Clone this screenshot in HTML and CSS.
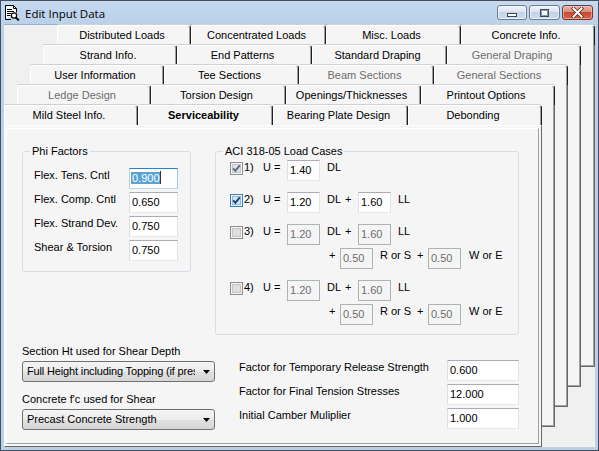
FILE: index.html
```html
<!DOCTYPE html>
<html>
<head>
<meta charset="utf-8">
<title>Edit Input Data</title>
<link rel="stylesheet" href="styles.css">
</head>
<body>
<div class="window">
  <div class="titlebar">
    <svg class="app-icon" width="16" height="16" viewBox="0 0 16 16">
      <path d="M1.5 14.5V0.5H9.5L12.5 3.5V7.5" fill="#fff" stroke="#000"/>
      <path d="M9.5 0.5V3.5H12.5" fill="none" stroke="#000"/>
      <path d="M3 4.5H8M3 6.5H10M3 8.5H7M3 10.5H6.5M1.5 14.5H7" fill="none" stroke="#000"/>
      <circle cx="10" cy="10.5" r="2.6" fill="#fff" stroke="#000" stroke-width="1.2"/>
      <path d="M11.8 12.4L14.8 15.4" stroke="#000" stroke-width="2"/>
    </svg>
    <span class="title">Edit Input Data</span>
    <div class="caption-buttons">
      <div class="cbtn cmin"><span class="min-glyph"></span></div>
      <div class="cbtn cmax"><span class="max-glyph"></span></div>
      <div class="cbtn cclose">
        <svg width="13" height="11" viewBox="0 0 13 11">
          <path d="M2.5 1.5L10.5 9.5M10.5 1.5L2.5 9.5" stroke="#5a2a22" stroke-width="3.6" stroke-linecap="square"/>
          <path d="M2.5 1.5L10.5 9.5M10.5 1.5L2.5 9.5" stroke="#fff" stroke-width="2" stroke-linecap="square"/>
        </svg>
      </div>
    </div>
  </div>

  <div class="client">
    <div class="deck">
      <div class="layer l1">
        <div class="tabrow">
          <div class="tab wa">Distributed Loads</div>
          <div class="tab wb">Concentrated Loads</div>
          <div class="tab wb">Misc. Loads</div>
          <div class="tab wa">Concrete Info.</div>
        </div>
        <div class="sheet"></div>
      </div>
      <div class="layer l2">
        <div class="tabrow">
          <div class="tab wa">Strand Info.</div>
          <div class="tab wb">End Patterns</div>
          <div class="tab wb">Standard Draping</div>
          <div class="tab wa off">General Draping</div>
        </div>
        <div class="sheet"></div>
      </div>
      <div class="layer l3">
        <div class="tabrow">
          <div class="tab wa">User Information</div>
          <div class="tab wb">Tee Sections</div>
          <div class="tab wb off">Beam Sections</div>
          <div class="tab wa off">General Sections</div>
        </div>
        <div class="sheet"></div>
      </div>
      <div class="layer l4">
        <div class="tabrow">
          <div class="tab wa off">Ledge Design</div>
          <div class="tab wb">Torsion Design</div>
          <div class="tab wb">Openings/Thicknesses</div>
          <div class="tab wa">Printout Options</div>
        </div>
        <div class="sheet"></div>
      </div>
      <div class="layer l5">
        <div class="tabrow">
          <div class="tab wa">Mild Steel Info.</div>
          <div class="tab wb active">Serviceability</div>
          <div class="tab wb">Bearing Plate Design</div>
          <div class="tab wa">Debonding</div>
        </div>
        <div class="sheet front">
          <div class="pane">
            <div class="top-section">
              <div class="group phi">
                <span class="group-title">Phi Factors</span>
                <div class="prow"><span class="lbl plbl">Flex. Tens. Cntl</span><span class="tb focus w49"><span class="sel">0.900</span><span class="caret"></span></span></div>
                <div class="prow"><span class="lbl plbl">Flex. Comp. Cntl</span><span class="tb w49">0.650</span></div>
                <div class="prow"><span class="lbl plbl">Flex. Strand Dev.</span><span class="tb w49">0.750</span></div>
                <div class="prow"><span class="lbl plbl">Shear &amp; Torsion</span><span class="tb w49">0.750</span></div>
              </div>

              <div class="group aci">
                <span class="group-title">ACI 318-05 Load Cases</span>
                <div class="arow">
                  <svg class="cb" width="13" height="13" viewBox="0 0 13 13">
                    <rect x="0.5" y="0.5" width="12" height="12" fill="#f4f4f4" stroke="#8f8f8f"/>
                    <rect x="2.5" y="2.5" width="8" height="8" fill="#dedfe0" stroke="#c4c6c8"/>
                    <path d="M3.2 6.3L5.4 8.8L9.8 3.4" fill="none" stroke="#5e6a80" stroke-width="1.9"/>
                  </svg>
                  <span class="lbl n1">1)</span><span class="lbl ueq">U =</span>
                  <span class="tb w33">1.40</span>
                  <span class="lbl dl only">DL</span>
                </div>
                <div class="arow">
                  <svg class="cb" width="13" height="13" viewBox="0 0 13 13">
                    <rect x="0.5" y="0.5" width="12" height="12" fill="#eef6fc" stroke="#3c7fb1"/>
                    <rect x="2.5" y="2.5" width="8" height="8" fill="#cfe5f6" stroke="#8fbcdc"/>
                    <path d="M3.2 6.3L5.4 8.8L9.8 3.4" fill="none" stroke="#233f68" stroke-width="1.9"/>
                  </svg>
                  <span class="lbl n1">2)</span><span class="lbl ueq">U =</span>
                  <span class="tb w33">1.20</span>
                  <span class="lbl dl">DL</span><span class="lbl plus">+</span>
                  <span class="tb w33">1.60</span>
                  <span class="lbl ll">LL</span>
                </div>
                <div class="arow">
                  <svg class="cb" width="13" height="13" viewBox="0 0 13 13">
                    <rect x="0.5" y="0.5" width="12" height="12" fill="#f4f4f4" stroke="#8f8f8f"/>
                    <rect x="2.5" y="2.5" width="8" height="8" fill="#dedfe0" stroke="#c4c6c8"/>
                  </svg>
                  <span class="lbl n1">3)</span><span class="lbl ueq">U =</span>
                  <span class="tb dis w33">1.20</span>
                  <span class="lbl dl">DL</span><span class="lbl plus">+</span>
                  <span class="tb dis w33">1.60</span>
                  <span class="lbl ll">LL</span>
                </div>
                <div class="arow sub">
                  <span class="lbl lead">+</span>
                  <span class="tb dis w33">0.50</span>
                  <span class="lbl ros">R or S</span><span class="lbl plus2">+</span>
                  <span class="tb dis w33">0.50</span>
                  <span class="lbl woe">W or E</span>
                </div>
                <div class="arow">
                  <svg class="cb" width="13" height="13" viewBox="0 0 13 13">
                    <rect x="0.5" y="0.5" width="12" height="12" fill="#f4f4f4" stroke="#8f8f8f"/>
                    <rect x="2.5" y="2.5" width="8" height="8" fill="#dedfe0" stroke="#c4c6c8"/>
                  </svg>
                  <span class="lbl n1">4)</span><span class="lbl ueq">U =</span>
                  <span class="tb dis w33">1.20</span>
                  <span class="lbl dl">DL</span><span class="lbl plus">+</span>
                  <span class="tb dis w33">1.60</span>
                  <span class="lbl ll">LL</span>
                </div>
                <div class="arow sub">
                  <span class="lbl lead">+</span>
                  <span class="tb dis w33">0.50</span>
                  <span class="lbl ros">R or S</span><span class="lbl plus2">+</span>
                  <span class="tb dis w33">0.50</span>
                  <span class="lbl woe">W or E</span>
                </div>
              </div>
            </div>

            <div class="bottom-section">
              <div class="left-col">
                <div class="lbl cap">Section Ht used for Shear Depth</div>
                <div class="combo">
                  <span class="combo-text narrow">Full Height including Topping (if pres</span>
                  <svg class="arrow" width="7" height="4" viewBox="0 0 7 4"><path d="M0 0H7L3.5 4Z" fill="#000"/></svg>
                </div>
                <div class="lbl cap cap2">Concrete f'c used for Shear</div>
                <div class="combo">
                  <span class="combo-text">Precast Concrete Strength</span>
                  <svg class="arrow" width="7" height="4" viewBox="0 0 7 4"><path d="M0 0H7L3.5 4Z" fill="#000"/></svg>
                </div>
              </div>
              <div class="right-col">
                <div class="rrow"><span class="lbl rlbl">Factor for Temporary Release Strength</span><span class="tb w72">0.600</span></div>
                <div class="rrow"><span class="lbl rlbl">Factor for Final Tension Stresses</span><span class="tb w72">12.000</span></div>
                <div class="rrow"><span class="lbl rlbl">Initial Camber Muliplier</span><span class="tb w72">1.000</span></div>
              </div>
            </div>
          </div>
        </div>
      </div>
    </div>
  </div>
</div>
</body>
</html>
```
FILE: styles.css
```css
* { box-sizing: border-box; }

body {
  margin: 0;
  width: 599px;
  height: 451px;
  overflow: hidden;
  font-family: "Liberation Sans", Arial, sans-serif;
  font-size: 11px;
  color: #000;
  background: #fff;
}

.window {
  width: 599px;
  height: 451px;
  border: 1px solid #434e5e;
  background: linear-gradient(#c6d9ef, #b9d1ea 24px, #b9d1ea);
  padding: 0 3px 4px 3px;
  display: flex;
  flex-direction: column;
}

/* ---------- title bar ---------- */
.titlebar {
  height: 23px;
  display: flex;
  align-items: flex-start;
  flex: none;
}
.app-icon { margin-top: 4px; flex: none; }
.title {
  font-family: "Open Sans", "Noto Sans", sans-serif;
  font-size: 11.5px;
  line-height: 16px;
  margin-top: 5px;
  margin-left: 5px;
  color: #000;
}
.caption-buttons {
  margin-left: auto;
  margin-right: 2px;
  margin-top: 4px;
  display: flex;
  gap: 2px;
}
.cbtn {
  height: 15px;
  border: 1px solid #6a7a90;
  border-radius: 3px;
  background: linear-gradient(#f0f4fa, #dbe5f1 45%, #c3d3e6 50%, #cfdced);
  display: flex;
  align-items: center;
  justify-content: center;
  box-shadow: inset 0 0 0 1px rgba(255,255,255,0.6);
}
.cmin { width: 30px; }
.cmax { width: 31px; }
.cclose {
  width: 31px;
  border-color: #6b3b33;
  background: linear-gradient(#eab1a4, #dc8b78 45%, #c8492f 50%, #d16a51);
  box-shadow: inset 0 0 0 1px rgba(255,220,210,0.5);
}
.min-glyph {
  width: 10px;
  height: 4px;
  border: 1px solid #3b4a60;
  background: #fff;
  margin-top: 5px;
}
.max-glyph {
  width: 9px;
  height: 8px;
  border: 1px solid #3b4a60;
  background: #fff;
  box-shadow: inset 0 0 0 1px #8c9ab0;
}

/* ---------- client ---------- */
.client {
  flex: 1;
  background: #f0f0f0;
  border-top: 1px solid #9bb1cb;
}
.deck {
  display: grid;
  grid-template-columns: 1fr;
  grid-template-rows: 1fr;
  height: 100%;
}
.layer {
  grid-area: 1 / 1;
  width: 538px;
  display: flex;
  flex-direction: column;
  align-self: start;
  justify-self: start;
}
.l1 { margin: 0 0 0 53px; }
.l2 { margin: 20px 0 0 39px; }
.l3 { margin: 40px 0 0 26px; }
.l4 { margin: 60px 0 0 13px; }
.l5 { margin: 80px 0 0 0; }

.tabrow { display: flex; height: 20px; }
.tab {
  height: 20px;
  background: #f5f5f5;
  border-top: 1px solid #ffffff;
  border-left: 1px solid #ffffff;
  border-right: 1px solid #1e1e1e;
  box-shadow: inset -1px 0 #a0a0a0, 0 -1px #d0d0d0;
  border-radius: 2px 3px 0 0;
  text-align: center;
  line-height: 18px;
  white-space: nowrap;
  overflow: hidden;
  padding-right: 4px;
}
.tab.wa { width: 134px; }
.tab.wb { width: 135px; }
.tab.off { color: #6d6d6d; }
.tab.active { font-weight: bold; }

.sheet {
  height: 322px;
  background: #f5f5f5;
  border-left: 1px solid #ffffff;
  border-right: 1px solid #696969;
  border-bottom: 1px solid #696969;
  box-shadow: inset -1px -1px #a0a0a0;
}
.sheet.front {
  height: 322px;
  box-shadow: none;
  border-top: 1px solid #ffffff;
  padding: 2px 2px 2px 1px;
}
.pane {
  height: 100%;
  border: 1px solid;
  border-color: #ffffff #a0a0a0 #a0a0a0 #ffffff;
  padding: 22px 0 0 15px;
}

/* ---------- common controls ---------- */
.lbl {
  line-height: 13px;
  padding-top: 1px;
  white-space: nowrap;
  flex: none;
}
.tb {
  display: block;
  flex: none;
  height: 21px;
  border: 1px solid;
  border-color: #abadb3 #e2e3ea #e3e9ef #dbdfe6;
  background: #ffffff;
  padding: 0 2px;
  line-height: 18px;
  white-space: nowrap;
  overflow: hidden;
}
.tb.dis {
  border-color: #adb2b5;
  background: #f5f5f5;
  color: #6d6d6d;
}
.tb.focus {
  border-color: #3d7bad #a4c9e3 #b7d9ed #b5cfe7;
  padding-left: 1px;
}
.sel {
  background: #5aa3d6;
  color: #ffffff;
  padding-left: 1px;
}
.caret {
  display: inline-block;
  width: 1px;
  height: 13px;
  background: #6a2020;
  vertical-align: -2px;
}
.w33 { width: 33px; }
.w49 { width: 49px; }
.w72 { width: 72px; }

/* ---------- group boxes ---------- */
.top-section {
  display: flex;
  align-items: flex-start;
  gap: 24px;
}
.group {
  position: relative;
  border: 1px solid #d5dfe5;
  border-radius: 3px;
}
.group-title {
  position: absolute;
  top: -7px;
  left: 7px;
  padding: 0 2px;
  line-height: 13px;
  background: #f5f5f5;
  white-space: nowrap;
}
.phi {
  width: 169px;
  padding: 16px 0 10px 11px;
}
.prow {
  display: flex;
  height: 21px;
}
.prow + .prow { margin-top: 3px; }
.plbl { width: 95px; }

.aci {
  width: 304px;
  padding: 8px 0 9px 14px;
}
.arow {
  display: flex;
  align-items: flex-start;
  height: 21px;
}
.arow + .arow { margin-top: 11px; }
.arow.sub { margin-top: 3px; }
.cb { flex: none; margin-top: 2px; }
.n1 { width: 19px; margin-left: 1px; }
.ueq { width: 24px; }
.dl { width: 18px; margin-left: 7px; }
.plus { width: 13px; }
.ll { margin-left: 7px; }
.lead { width: 11px; margin-left: 99px; }
.ros { width: 37px; margin-left: 7px; }
.plus2 { width: 11px; }
.woe { margin-left: 8px; }

/* ---------- bottom area ---------- */
.bottom-section {
  display: flex;
  align-items: flex-start;
  gap: 24px;
  margin-top: 9px;
}
.left-col { width: 193px; }
.cap { margin-bottom: 3px; }
.cap2 { margin-top: 10px; }
.combo {
  width: 193px;
  height: 21px;
  border: 1px solid #707070;
  border-radius: 3px;
  background: linear-gradient(#f4f4f4, #ececec 50%, #e0e0e0 50%, #d6d6d6);
  display: flex;
  align-items: center;
  padding-left: 4px;
}
.combo-text {
  width: 168px;
  overflow: hidden;
  white-space: nowrap;
  line-height: 19px;
}
.combo-text.narrow { letter-spacing: -0.15px; }
.arrow {
  margin-left: auto;
  margin-right: 4px;
  flex: none;
}
.right-col { margin-top: 16px; }
.rrow {
  display: flex;
  height: 21px;
}
.rrow + .rrow { margin-top: 3px; }
.rlbl { width: 208px; }
```
